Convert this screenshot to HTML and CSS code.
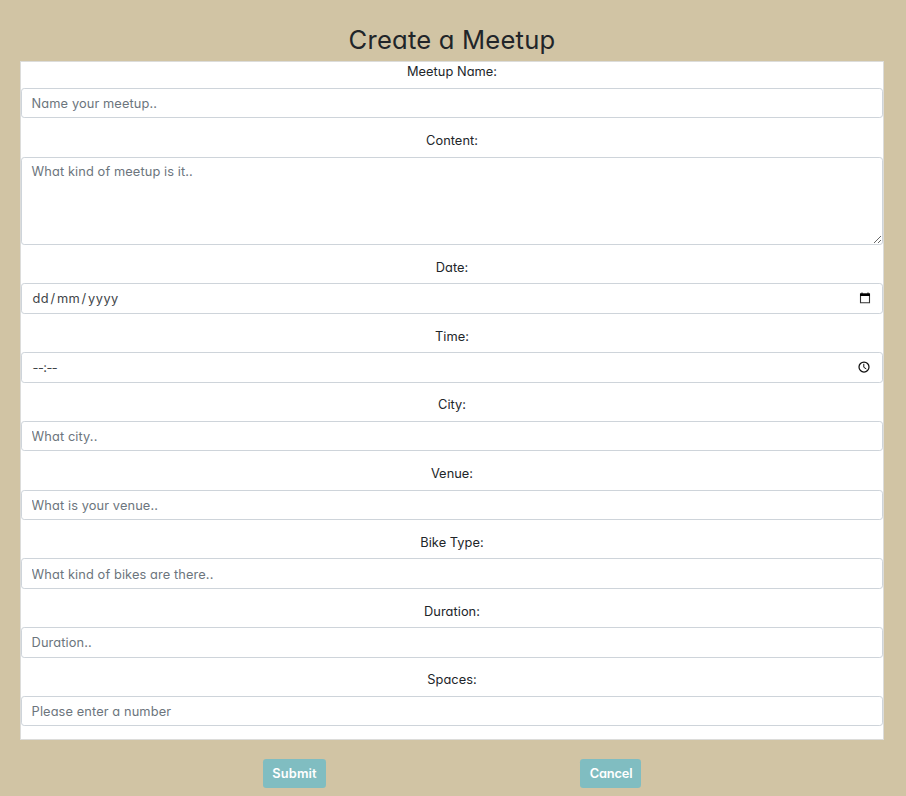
FILE: index.html
```
<!DOCTYPE html>
<html lang="en-GB">
<head>
<meta charset="utf-8">
<title>Create a Meetup</title>
<link rel="stylesheet" href="styles.css">
</head>
<body>
<h1><span>Create a Meetup</span></h1>
<form>
  <div class="panel">
    <div class="field"><label for="name">Meetup Name:</label><input class="control" id="name" placeholder="Name your meetup.."></div>
    <div class="field"><label for="content">Content:</label><textarea class="control area" id="content" placeholder="What kind of meetup is it.."></textarea></div>
    <div class="field"><label>Date:</label>
      <div class="control picker"><span class="date">dd<i>/</i>mm<i>/</i>yyyy</span>
        <svg class="calendar" viewBox="0 0 12 12"><path d="M1.500 2h9v8.700h-9z" fill="none" stroke="#333" stroke-width="1.1"/><path d="M1 1.500h10V4H1zM2.500.5h1v1.500h-1zM8.500.5h1v1.500h-1z" fill="#000"/></svg>
      </div></div>
    <div class="field"><label class="low">Time:</label>
      <div class="control picker"><span class="time">--:--</span>
        <svg class="clock" viewBox="0 0 12 12"><circle cx="6" cy="6" r="5" fill="none" stroke="#111" stroke-width="1.25"/><path d="M5.800 2.800v3.500l2.500 1.600" fill="none" stroke="#111"/></svg>
      </div></div>
    <div class="field"><label for="city">City:</label><input class="control" id="city" placeholder="What city.."></div>
    <div class="field"><label for="venue">Venue:</label><input class="control" id="venue" placeholder="What is your venue.."></div>
    <div class="field"><label for="bike">Bike Type:</label><input class="control" id="bike" placeholder="What kind of bikes are there.."></div>
    <div class="field"><label for="duration">Duration:</label><input class="control duration" id="duration" placeholder="Duration.."></div>
    <div class="field"><label for="spaces">Spaces:</label><input class="control" id="spaces" placeholder="Please enter a number"></div>
  </div>
  <div class="actions">
    <button type="button" class="submit">Submit</button>
    <button type="button" class="cancel">Cancel</button>
  </div>
</form>
</body>
</html>
```
FILE: styles.css
```
* { box-sizing: border-box; }
body {
  margin: 0;
  padding: 24px 22px 0 20px;
  height: 796px;
  overflow: hidden;
  background: #d1c4a4;
  color: #212529;
  font: 12.8px/19.2px Inter, "Open Sans", sans-serif;
  font-feature-settings: "cv11", "ss03";
}
h1 {
  margin: 0;
  height: 37px;
  text-align: center;
  font-size: 25.6px;
  line-height: 32px;
  font-weight: 400;
  letter-spacing: .2px;
}
.panel {
  height: 679px;
  background: #fff;
  border: 1px solid #dcdcda;
}
.field { height: 68.8px; }
.field:has(.area) { height: 126.8px; }
label {
  display: block;
  height: 19.2px;
  margin-bottom: 6.4px;
  text-align: center;
  letter-spacing: .05px;
}
.low { padding-top: .4px; }
.control {
  display: block;
  width: 100%;
  height: 30.4px;
  padding: 5.6px 9.6px 4px;
  border: 1px solid #ced4da;
  border-radius: 3.2px;
  background: #fff;
  color: #212529;
  font: inherit;
  font-feature-settings: inherit;
  letter-spacing: .11px;
}
.control::placeholder { color: #6c757d; opacity: 1; }
.duration { padding: 4.8px 9.6px; }
.area {
  height: 88px;
  margin-top: 6.8px;
  padding-top: 4.4px;
  resize: vertical;
}
label:has(+ .area) { margin-bottom: 0; }
.picker {
  display: flex;
  align-items: center;
  justify-content: space-between;
  height: 30.8px;
  padding: 0 11px 0 10.5px;
  color: #404448;
}
.picker svg { display: block; width: 12px; height: 12px; }
.date { letter-spacing: .5px; }
.date i { font-style: normal; margin: 0 1.3px; }
.time { letter-spacing: -.5px; }
.calendar { margin-bottom: 1px; }
.clock { margin-right: 1px; }
.actions {
  display: grid;
  grid-template-columns: 63px 61px;
  column-gap: 254px;
  padding: 19px 0 0 243px;
}
button {
  height: 29px;
  padding: 0;
  border: 0;
  border-radius: 3.2px;
  background: #80bdc1;
  color: #fff;
  font: 600 12.8px/19.2px Inter, "Open Sans", sans-serif;
  font-feature-settings: inherit;
}
.submit { letter-spacing: .15px; }
.cancel { letter-spacing: -.15px; padding-left: 1px; }
```
